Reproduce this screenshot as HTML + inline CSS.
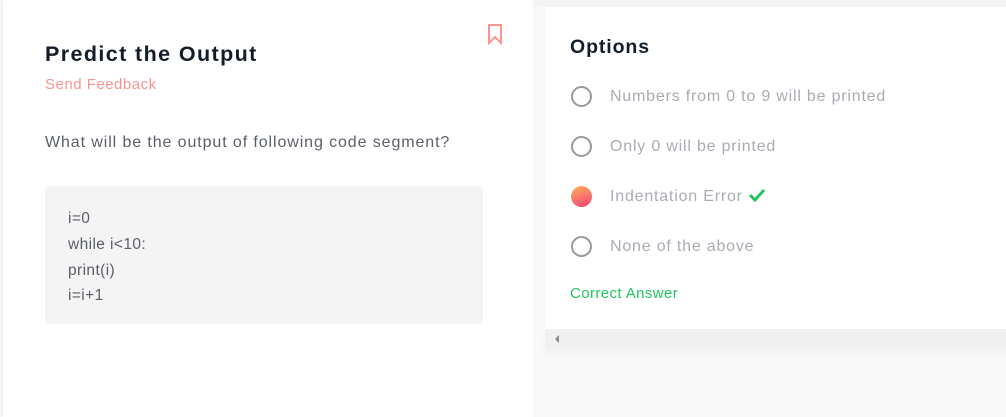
<!DOCTYPE html>
<html><head><style>
body{margin:0;width:1006px;height:417px;overflow:hidden;font-family:"Liberation Sans",sans-serif;background:#fafafa;position:relative}
.left{position:absolute;left:3px;top:0;width:530px;height:417px;background:#fff;box-shadow:-2px 0 8px #eee}
.right{position:absolute;left:533px;top:0;width:473px;height:417px;background:#f9f9f9}
.card{position:absolute;left:12px;top:7px;width:470px;height:322px;background:#fff}
.top{position:absolute;left:0;top:0;width:473px;height:7px;background:#f4f4f4}
.sb{position:absolute;left:12px;top:329px;width:470px;height:20px;background:#f0f0f0;box-shadow:0 6px 10px #f2f2f2}
h1{position:absolute;left:42px;top:42px;margin:0;font-size:21.5px;font-weight:bold;color:#141c2b;letter-spacing:1.4px}
.fb{position:absolute;left:42px;top:76px;font-size:15px;color:#f8948f;letter-spacing:.5px}
.q{position:absolute;left:42px;top:134px;font-size:16px;color:#5a5f69;letter-spacing:.9px}
.code{position:absolute;left:42px;top:186px;width:438px;height:138px;background:#f4f4f4;border-radius:4px}
.code div{position:absolute;left:23px;font-size:15.5px;color:#5a5f69;letter-spacing:.4px}
h2{position:absolute;left:25px;top:29px;margin:0;font-size:19.5px;font-weight:bold;color:#141c2b;letter-spacing:.9px}
.opt{position:absolute;left:26px;font-size:16px;color:#a8acb3;letter-spacing:.8px}
.r{position:absolute;left:26px;width:21px;height:21px;border:2px solid #999;border-radius:50%;box-sizing:border-box}
.ca{position:absolute;left:25px;top:278px;font-size:15px;color:#22c55e;letter-spacing:.4px}
</style></head><body>
<div class="left">
<h1>Predict the Output</h1>
<div class="fb">Send Feedback</div>
<svg style="position:absolute;left:484px;top:24px" width="16" height="21" viewBox="0 0 16 21"><path d="M2 1H14V19L8 13L2 19Z" fill="none" stroke="#f8948f" stroke-width="2"/></svg>
<div class="q">What will be the output of following code segment?</div>
<div class="code">
<div style="top:24px">i=0</div><div style="top:50px">while i&lt;10:</div><div style="top:76px">print(i)</div><div style="top:101px">i=i+1</div>
</div>
</div>
<div class="right">
<div class="top"></div>
<div class="card">
<h2>Options</h2>
<div class="r" style="top:79px"></div><div class="opt" style="left:65px;top:81px">Numbers from 0 to 9 will be printed</div>
<div class="r" style="top:129px"></div><div class="opt" style="left:65px;top:131px">Only 0 will be printed</div>
<div class="r" style="top:179px;border:none;background:linear-gradient(160deg,#fbb45a,#f43f76)"></div><div class="opt" style="left:65px;top:181px">Indentation Error <svg width="18" height="14" viewBox="0 0 18 14" style="vertical-align:-1px"><path d="M2 7L7 12L16 2" fill="none" stroke="#22c55e" stroke-width="3"/></svg></div>
<div class="r" style="top:229px"></div><div class="opt" style="left:65px;top:231px">None of the above</div>
<div class="ca">Correct Answer</div>
</div>
<div class="sb"><div style="position:absolute;left:10px;top:6px;border-right:4px solid #888;border-top:4px solid transparent;border-bottom:4px solid transparent"></div></div>
</div>
</body></html>
